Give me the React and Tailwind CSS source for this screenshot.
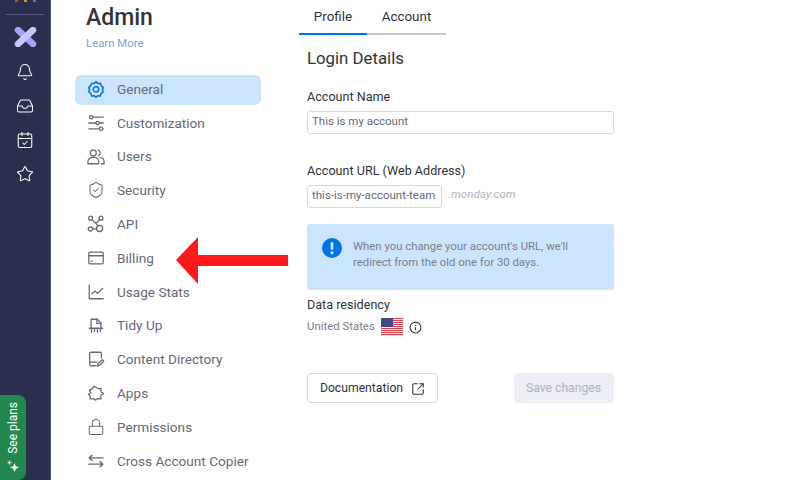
import { Bell, Inbox, CalendarCheck, Star, ShieldCheck, Lock, Info, SquareArrowOutUpRight } from "lucide-react";

const line = { fill: "none", stroke: "currentColor", strokeWidth: 1.4, strokeLinecap: "round", strokeLinejoin: "round" };

function GearIcon({ className }) {
  return (
    <svg className={className} viewBox="0 0 20 20" {...line} strokeWidth={1.7}>
      <path d="M10 1.8 12 3.9 15.2 3.7 15.9 6.6 18.2 8.4 17 10.9 18 13.4 15.6 14.9 14.8 17.7 11.8 17.5 10 19 8.2 17.5 5.2 17.7 4.4 14.9 2 13.4 3 10.9 1.8 8.4 4.1 6.6 4.8 3.7 8 3.9z" />
      <circle cx="10" cy="10.4" r="3" />
    </svg>
  );
}

function SlidersIcon({ className }) {
  return (
    <svg className={className} viewBox="0 0 20 20" {...line}>
      <circle cx="4.6" cy="3.5" r="1.8" />
      <path d="M7 3.5h11" />
      <path d="M2 10h7.5M14 10h4" />
      <circle cx="11.7" cy="10" r="1.8" />
      <path d="M2 16.5h11.5M18 16.5h0" />
      <circle cx="15.6" cy="16.5" r="1.8" />
    </svg>
  );
}

function UsersIcon({ className }) {
  return (
    <svg className={className} viewBox="0 0 20 20" {...line}>
      <circle cx="7" cy="5.5" r="3.3" />
      <path d="M12.5 2.4a3.3 3.3 0 0 1 0 6.2" />
      <path d="M1 17.5v-2.2A4.8 4.8 0 0 1 5.8 10.5h2.4a4.8 4.8 0 0 1 4.8 4.8v2.2z" />
      <path d="M14.5 10.8a4.8 4.8 0 0 1 4.5 4.7v2h-3" />
    </svg>
  );
}

function ApiIcon({ className }) {
  return (
    <svg className={className} viewBox="0 0 20 20" {...line}>
      <circle cx="4" cy="3.5" r="2.2" />
      <circle cx="15.5" cy="3.5" r="2.2" />
      <circle cx="3.8" cy="15.5" r="2.4" />
      <circle cx="14" cy="15" r="3.4" />
      <path d="M5.6 5.1 10 9.5 14 5.2M10 9.5l2.2 2.6M6.2 15.5h4.4" />
    </svg>
  );
}

function CardIcon({ className }) {
  return (
    <svg className={className} viewBox="0 0 20 20" {...line}>
      <rect x="2" y="3.5" width="16" height="13" rx="1.2" />
      <path d="M2 7.5h16M4.5 13.5h1" />
    </svg>
  );
}

function ChartIcon({ className }) {
  return (
    <svg className={className} viewBox="0 0 20 20" {...line}>
      <path d="M2.5 2.5v15h15.5" />
      <path d="M5.5 12 9 9l2.5 2.5L17.5 6" />
    </svg>
  );
}

function TidyIcon({ className }) {
  return (
    <svg className={className} viewBox="0 0 20 20" {...line}>
      <path d="M4.5 12V2.5h7l4 4V12" />
      <path d="M11 2.5V7h4.5" />
      <path d="M2.5 12.5h15" />
      <path d="M5 13v4M8.3 13v3M11.6 13v4M15 13v3" />
    </svg>
  );
}

function ContentIcon({ className }) {
  return (
    <svg className={className} viewBox="0 0 20 20" {...line}>
      <path d="M16 9V4a1.5 1.5 0 0 0-1.5-1.5h-10A1.5 1.5 0 0 0 3 4v12a1.5 1.5 0 0 0 1.5 1.5H10" />
      <path d="M3 13.5h8" />
      <path d="m11.5 17.8.6-2.6 5-4.4 1.6 1.8-5 4.5z" />
    </svg>
  );
}

function PuzzleIcon({ className }) {
  return (
    <svg className={className} viewBox="0 0 20 20" {...line}>
      <path d="M8 2.5 13 5.5 15.5 5 15.5 8.5 18.5 10.5 15.5 12.5 15.5 16.5 11 16.5 9.5 18 7.5 16.5 3.5 16.5 3.5 13 1.5 11.5 4.5 9.5 2.5 7 5 6z" />
    </svg>
  );
}

function SwapIcon({ className }) {
  return (
    <svg className={className} viewBox="0 0 20 20" {...line} strokeWidth={1.6}>
      <path d="M18 6.5H2.5M5.5 3.5l-3 3 3 3" />
      <path d="M2 13.5h15.5M14.5 10.5l3 3-3 3" />
    </svg>
  );
}

function MainLogo() {
  return (
    <svg className="h-[20px] w-[23px]" viewBox="0 0 23 20">
      <path d="M4 3 19 17" stroke="#a3a4fb" strokeWidth="6.5" strokeLinecap="round" />
      <path d="M19 3 4 17" stroke="#c6c7ff" strokeWidth="6.5" strokeLinecap="round" />
    </svg>
  );
}

function UsFlag() {
  const stripes = [0, 1, 2, 3, 4, 5, 6, 7, 8];
  return (
    <svg className="h-[18px] w-[22px]" viewBox="0 0 22 18">
      <rect width="22" height="18" fill="#f7dfe2" />
      {stripes.map((i) => (
        <rect key={i} y={i * 2} width="22" height="1" fill="#d0454f" />
      ))}
      <rect width="12" height="9" fill="#444a85" />
    </svg>
  );
}

const menu = [
  { label: "General", icon: GearIcon, active: true },
  { label: "Customization", icon: SlidersIcon },
  { label: "Users", icon: UsersIcon },
  { label: "Security", icon: ShieldCheck },
  { label: "API", icon: ApiIcon },
  { label: "Billing", icon: CardIcon },
  { label: "Usage Stats", icon: ChartIcon },
  { label: "Tidy Up", icon: TidyIcon },
  { label: "Content Directory", icon: ContentIcon },
  { label: "Apps", icon: PuzzleIcon },
  { label: "Permissions", icon: Lock },
  { label: "Cross Account Copier", icon: SwapIcon },
];

export default function App() {
  return (
    <div className="relative flex h-[480px] w-[800px] overflow-hidden bg-white font-['Roboto',sans-serif] text-[#323338]">
      {/* left rail */}
      <div className="flex w-[51px] shrink-0 flex-col items-center border-r border-[#4b4f78] bg-[#292f4c]">
        <div className="flex h-[2px] w-full justify-center gap-[6px]">
          <span className="h-[2px] w-[3px] bg-[#d83a52]" />
          <span className="h-[2px] w-[3px] bg-[#c79a2a]" />
          <span className="h-[2px] w-[3px] bg-[#2f9e5b]" />
        </div>
        <div className="mt-[12px] h-px w-[38px] bg-[#5a5e80]" />
        <div className="mt-[12px] flex h-[20px] items-center">
          <MainLogo />
        </div>
        <div className="mt-[16px] flex flex-col gap-[16px] text-white">
          <Bell size={18} strokeWidth={1.4} />
          <Inbox size={18} strokeWidth={1.4} />
          <CalendarCheck size={18} strokeWidth={1.4} />
          <Star size={18} strokeWidth={1.4} />
        </div>
      </div>

      {/* admin menu */}
      <div className="w-[248px] shrink-0 pl-[24px]">
        <h1 className="mt-[4px] pl-[11px] text-[23px] leading-[28px] font-medium">Admin</h1>
        <a className="mt-[4px] block pl-[11px] text-[11.4px] leading-[14px] text-[#7f9fd6]">Learn More</a>
        <ul className="mt-[25px] flex w-[186px] flex-col gap-[3.8px]">
          {menu.map((item) => (
            <li
              key={item.label}
              className={
                item.active
                  ? "flex h-[30px] items-center gap-[12px] rounded-[6px] bg-[#cce5ff] pb-[2px] pl-[12px] text-[13.6px] text-[#676879]"
                  : "flex h-[30px] items-center gap-[12px] pb-[2px] pl-[12px] text-[13.6px] text-[#676879]"
              }
            >
              <item.icon
                className={item.active ? "h-[18px] w-[18px] text-[#0073ea]" : "h-[18px] w-[18px] text-[#676879]"}
                strokeWidth={1.4}
              />
              <span className="whitespace-nowrap">{item.label}</span>
            </li>
          ))}
        </ul>
      </div>

      {/* main content */}
      <div className="w-[320px] shrink-0">
        <div className="flex h-[35px] w-[147px] border-b-2 border-[#c3c6d4] text-[13.4px]">
          <div className="-mb-[2px] flex h-[35px] w-[68px] items-center justify-center border-b-2 border-[#0073ea] pt-[2px]">
            Profile
          </div>
          <div className="flex w-[79px] items-center justify-center pt-[2px]">Account</div>
        </div>

        <div className="ml-[8px] w-[307px]">
          <h2 className="mt-[12px] text-[16.8px] leading-[22px]">Login Details</h2>

          <label className="mt-[20px] block text-[12.6px] leading-[16px]">Account Name</label>
          <div className="mt-[6px] flex h-[23px] items-center rounded-[3px] border border-[#d5d8df] px-[4px] pb-[1px] text-[11.5px] text-[#676879]">
            This is my account
          </div>

          <label className="mt-[29px] block text-[12.6px] leading-[16px]">Account URL (Web Address)</label>
          <div className="mt-[6px] flex items-center gap-[6px]">
            <div className="flex h-[23px] w-[135px] items-center rounded-[3px] border border-[#d5d8df] px-[4px] pb-[1px] text-[11.5px] whitespace-nowrap text-[#676879]">
              this-is-my-account-team
            </div>
            <span className="pb-[3px] text-[11.6px] text-[#b5b6c0] italic">.monday.com</span>
          </div>

          <div className="mt-[16px] flex h-[66px] gap-[11px] rounded-[3px] bg-[#cce5ff] pt-[14px] pl-[15px]">
            <svg className="h-[20px] w-[20px] shrink-0" viewBox="0 0 20 20">
              <circle cx="10" cy="10" r="10" fill="#0073ea" />
              <rect x="8.6" y="4" width="2.8" height="8" rx="1.4" fill="#cce5ff" />
              <circle cx="10" cy="14.8" r="1.6" fill="#cce5ff" />
            </svg>
            <p className="text-[11.35px] leading-[16px] text-[#7c7d8a]">
              When you change your account's URL, we'll
              <br />
              redirect from the old one for 30 days.
            </p>
          </div>

          <div className="mt-[7px] text-[12.6px] leading-[16px]">Data residency</div>
          <div className="mt-[3px] flex h-[22px] items-center text-[11.4px] text-[#7c7d8a]">
            <span>United States</span>
            <span className="ml-[6px]">
              <UsFlag />
            </span>
            <Info className="ml-[6px] h-[13px] w-[13px] text-[#323338]" strokeWidth={2} />
          </div>

          <div className="mt-[35px] flex items-center justify-between">
            <button className="flex h-[30px] w-[131px] items-center justify-center gap-[8px] rounded-[4px] border border-[#d5d8df] pt-[1px] text-[12.2px]">
              Documentation
              <SquareArrowOutUpRight className="h-[14px] w-[14px]" strokeWidth={1.8} />
            </button>
            <button className="h-[30px] w-[100px] rounded-[4px] bg-[#ecedf5] pt-[1px] pr-[1px] text-[12.2px] text-[#b0b2bf]">
              Save changes
            </button>
          </div>
        </div>
      </div>

      {/* see plans tab */}
      <div className="absolute bottom-0 left-0 flex h-[85px] w-[26px] flex-col items-center justify-end gap-[6px] rounded-r-[8px] bg-[#258750] pb-[8px] text-white">
        <span className="rotate-180 text-[12px] leading-[14px] whitespace-nowrap [writing-mode:vertical-rl]">See plans</span>
        <svg className="h-[12px] w-[12px]" viewBox="0 0 12 12" fill="#fff">
          <path d="M7.5 3 8.8 6.2 12 7.5 8.8 8.8 7.5 12 6.2 8.8 3 7.5 6.2 6.2z" />
          <path d="M2.5 0 3.3 1.7 5 2.5 3.3 3.3 2.5 5 1.7 3.3 0 2.5 1.7 1.7z" />
        </svg>
      </div>

      {/* red arrow annotation */}
      <svg className="absolute top-[237px] left-[176px] h-[47px] w-[112px]" viewBox="0 0 112 47">
        <path d="M0 23 22 0V18H112V29H22V47z" fill="#fe1a1a" />
      </svg>
    </div>
  );
}
